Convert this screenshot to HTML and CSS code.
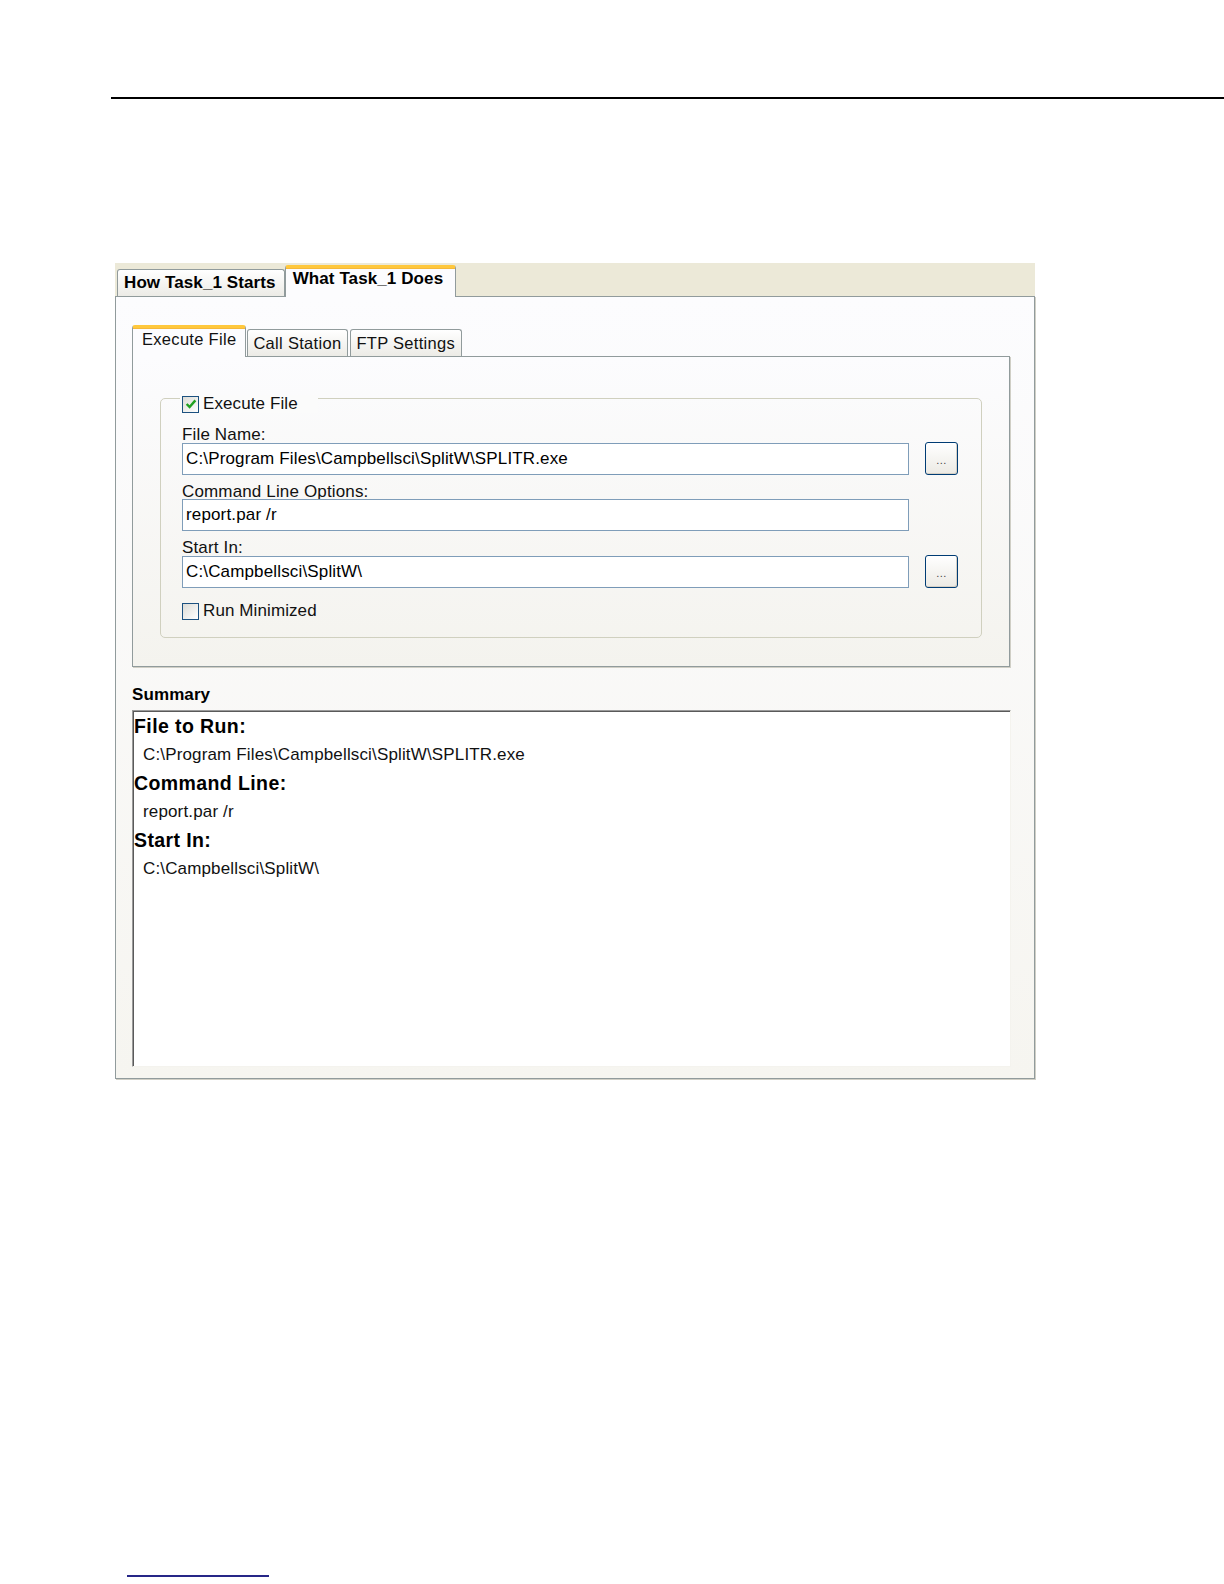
FILE: index.html
```html
<!DOCTYPE html>
<html>
<head>
<meta charset="utf-8">
<title>Task settings</title>
<link rel="stylesheet" href="styles.css">
</head>
<body>
<div class="page">
  <div class="top-rule"></div>

  <div class="dialog">
    <div class="tabstrip">
      <div class="tab">How Task_1 Starts</div>
      <div class="tab active">What Task_1 Does</div>
    </div>
    <div class="panel">
      <div class="subtabs">
        <div class="subtab active">Execute File</div>
        <div class="subtab">Call Station</div>
        <div class="subtab">FTP Settings</div>
      </div>
      <div class="subpanel">
        <div class="group">
          <div class="legend">
            <span class="check checked">
              <svg viewBox="0 0 11 11" width="12" height="12"><path d="M1.5 5.5 L4.2 8.2 L9.5 2.2" fill="none" stroke="#21a121" stroke-width="2.2"/></svg>
            </span>
            <span>Execute File</span>
          </div>
          <div class="field-label">File Name:</div>
          <div class="field-row">
            <div class="input">C:\Program Files\Campbellsci\SplitW\SPLITR.exe</div>
            <div class="browse">...</div>
          </div>
          <div class="field-label">Command Line Options:</div>
          <div class="field-row">
            <div class="input">report.par /r</div>
          </div>
          <div class="field-label">Start In:</div>
          <div class="field-row">
            <div class="input">C:\Campbellsci\SplitW\</div>
            <div class="browse">...</div>
          </div>
          <div class="check-row">
            <span class="check"></span>
            <span>Run Minimized</span>
          </div>
        </div>
      </div>
      <div class="summary-label">Summary</div>
      <div class="summary">
        <div class="sum-head">File to Run:</div>
        <div class="sum-val">C:\Program Files\Campbellsci\SplitW\SPLITR.exe</div>
        <div class="sum-head">Command Line:</div>
        <div class="sum-val">report.par /r</div>
        <div class="sum-head">Start In:</div>
        <div class="sum-val">C:\Campbellsci\SplitW\</div>
      </div>
    </div>
  </div>

  <div class="bottom-rule"></div>
</div>
</body>
</html>
```

FILE: styles.css
```css
html, body {
  margin: 0;
  padding: 0;
  background: #ffffff;
}

body {
  font-family: "Liberation Sans", Arial, sans-serif;
  color: #000;
}

.page {
  width: 1224px;
  height: 1584px;
  overflow: hidden;
  padding-top: 97px;
  box-sizing: border-box;
}

.top-rule {
  margin-left: 111px;
  height: 2px;
  background: #000;
}

.dialog {
  margin: 164px 0 0 115px;
  width: 920px;
}

/* outer tabs */
.tabstrip {
  display: flex;
  align-items: flex-end;
  height: 33px;
  background: #ece9d8;
  padding-left: 2px;
}

.tab {
  height: 27px;
  box-sizing: border-box;
  border: 1px solid #919b9c;
  border-bottom: none;
  border-radius: 3px 3px 0 0;
  background: linear-gradient(#ffffff, #ecebe6);
  font-weight: bold;
  font-size: 17px;
  line-height: 26px;
  padding: 0 8px 0 6px;
  white-space: nowrap;
  letter-spacing: 0.1px;
}

.tab.active {
  position: relative;
  z-index: 1;
  height: 32px;
  margin-bottom: -1px;
  background: #fcfcfe;
  border-top: 3px solid #ffc83c;
  box-shadow: inset 0 1px 0 #f5b83a;
  line-height: 22px;
  padding: 0 12px 0 7px;
}

.panel {
  border: 1px solid #919b9c;
  background: linear-gradient(#fcfcfe, #f6f5f0);
  padding: 28px 24px 11px 16px;
  box-shadow: 1px 1px 0 #d0cfc6;
}

/* inner tabs */
.subtabs {
  display: flex;
  align-items: flex-end;
  height: 31px;
  padding-left: 0;
}

.subtab {
  height: 27px;
  box-sizing: border-box;
  border: 1px solid #919b9c;
  border-bottom: none;
  border-radius: 3px 3px 0 0;
  background: linear-gradient(#ffffff, #ecebe6);
  font-size: 16.5px;
  letter-spacing: 0.3px;
  line-height: 27px;
  padding: 0 6px 0 5px;
  margin-left: 2px;
  white-space: nowrap;
  color: #111;
}

.subtab.active + .subtab {
  margin-left: 1px;
}

.subtab.active {
  position: relative;
  z-index: 1;
  margin-left: 0;
  height: 32px;
  margin-bottom: -1px;
  background: #fcfcfe;
  border-top: 3px solid #ffc83c;
  box-shadow: inset 0 1px 0 #f5b83a;
  line-height: 22px;
  padding: 0 9px 0 9px;
}

.subpanel {
  border: 1px solid #919b9c;
  background: linear-gradient(#fcfcfe, #f4f3ee);
  box-shadow: 1px 1px 0 #d0cfc6;
  padding: 41px 27px 28px 27px;
}

.group {
  position: relative;
  border: 1px solid #d0d0bf;
  border-radius: 5px;
  padding: 19px 23px 17px 21px;
}

.legend {
  position: absolute;
  top: -4px;
  left: 19px;
  display: flex;
  align-items: center;
  gap: 4px;
  padding: 0 20px 0 2px;
  background: #fbfbfb;
  font-size: 17px;
  letter-spacing: 0.1px;
  line-height: 18px;
  color: #111;
}

.check {
  width: 15px;
  height: 15px;
  border: 1px solid #1c5180;
  background: linear-gradient(135deg, #dcdcd7, #ffffff);
  display: inline-flex;
  align-items: center;
  justify-content: center;
  flex: none;
}

.field-label {
  font-size: 17px;
  letter-spacing: 0.15px;
  line-height: 18px;
  color: #111;
  margin-top: 8px;
  margin-bottom: -2px;
}

.field-label:first-of-type {
  margin-top: 0;
}

.field-row {
  display: flex;
  align-items: center;
  gap: 16px;
}

.input {
  width: 727px;
  height: 32px;
  box-sizing: border-box;
  border: 1px solid #7f9db9;
  background: #ffffff;
  font-size: 17px;
  letter-spacing: 0.15px;
  line-height: 30px;
  padding-left: 3px;
  color: #000;
  white-space: nowrap;
}

.browse {
  width: 33px;
  height: 33px;
  box-sizing: border-box;
  border: 1px solid #003c74;
  border-radius: 3px;
  background: linear-gradient(#ffffff, #eceae4);
  box-shadow: inset -1px -1px 0 #d6d0c5;
  font-size: 11px;
  color: #444;
  text-align: center;
  line-height: 34px;
  letter-spacing: 0.5px;
}

.check-row {
  display: flex;
  align-items: center;
  gap: 4px;
  margin-top: 14px;
  font-size: 17px;
  letter-spacing: 0.1px;
  line-height: 18px;
  color: #111;
}

.summary-label {
  margin-top: 18px;
  font-weight: bold;
  font-size: 17px;
  line-height: 20px;
  letter-spacing: 0.1px;
}

.summary {
  margin-top: 5px;
  margin-right: -1px;
  height: 357px;
  box-sizing: border-box;
  border: 1px solid;
  border-color: #9a9a9a #f4f3ee #f4f3ee #9a9a9a;
  box-shadow: inset 1px 1px 0 #5a5a5a;
  background: #ffffff;
  padding: 4px 0 0 1px;
}

.sum-head {
  font-weight: bold;
  font-size: 19.5px;
  line-height: 22px;
  margin-top: 6px;
  letter-spacing: 0.4px;
}

.sum-head:first-child {
  margin-top: 0;
}

.sum-val {
  font-size: 17px;
  line-height: 22px;
  margin-top: 7px;
  padding-left: 9px;
  letter-spacing: 0.15px;
  color: #111;
}

.bottom-rule {
  margin: 496px 0 0 127px;
  width: 142px;
  height: 2px;
  background: #262687;
}
```
